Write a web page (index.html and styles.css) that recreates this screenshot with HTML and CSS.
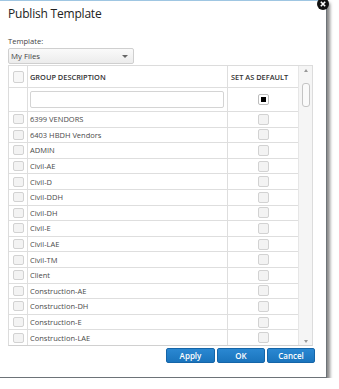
FILE: index.html
```html
<!DOCTYPE html>
<html>
<head>
<meta charset="utf-8">
<link rel="stylesheet" href="styles.css">
</head>
<body>
<div class="dialog">
  <div class="close"><svg width="12" height="12" viewBox="0 0 12 12"><circle cx="6" cy="6" r="6" fill="#111"/><path d="M3.8 3.8 L8.2 8.2 M8.2 3.8 L3.8 8.2" stroke="#fff" stroke-width="1.6"/></svg></div>
  <div class="title">Publish Template</div>
  <div class="label">Template:</div>
  <div class="select"><span>My Files</span><span class="caret"></span></div>
  <div class="grid">
    <div class="grid-body">
      <div class="row head">
        <div class="c-check"><span class="cb"></span></div>
        <div class="c-desc">GROUP DESCRIPTION</div>
        <div class="c-def">SET AS DEFAULT</div>
      </div>
      <div class="row filter">
        <div class="c-check"></div>
        <div class="c-desc"><div class="input"></div></div>
        <div class="c-def"><span class="cb checked"></span></div>
      </div>
      <div class="row"><div class="c-check"><span class="cb"></span></div><div class="c-desc">6399 VENDORS</div><div class="c-def"><span class="cb"></span></div></div>
      <div class="row"><div class="c-check"><span class="cb"></span></div><div class="c-desc">6403 HBDH Vendors</div><div class="c-def"><span class="cb"></span></div></div>
      <div class="row"><div class="c-check"><span class="cb"></span></div><div class="c-desc">ADMIN</div><div class="c-def"><span class="cb"></span></div></div>
      <div class="row"><div class="c-check"><span class="cb"></span></div><div class="c-desc">Civil-AE</div><div class="c-def"><span class="cb"></span></div></div>
      <div class="row"><div class="c-check"><span class="cb"></span></div><div class="c-desc">Civil-D</div><div class="c-def"><span class="cb"></span></div></div>
      <div class="row"><div class="c-check"><span class="cb"></span></div><div class="c-desc">Civil-DDH</div><div class="c-def"><span class="cb"></span></div></div>
      <div class="row"><div class="c-check"><span class="cb"></span></div><div class="c-desc">Civil-DH</div><div class="c-def"><span class="cb"></span></div></div>
      <div class="row"><div class="c-check"><span class="cb"></span></div><div class="c-desc">Civil-E</div><div class="c-def"><span class="cb"></span></div></div>
      <div class="row"><div class="c-check"><span class="cb"></span></div><div class="c-desc">Civil-LAE</div><div class="c-def"><span class="cb"></span></div></div>
      <div class="row"><div class="c-check"><span class="cb"></span></div><div class="c-desc">Civil-TM</div><div class="c-def"><span class="cb"></span></div></div>
      <div class="row"><div class="c-check"><span class="cb"></span></div><div class="c-desc">Client</div><div class="c-def"><span class="cb"></span></div></div>
      <div class="row"><div class="c-check"><span class="cb"></span></div><div class="c-desc">Construction-AE</div><div class="c-def"><span class="cb"></span></div></div>
      <div class="row"><div class="c-check"><span class="cb"></span></div><div class="c-desc">Construction-DH</div><div class="c-def"><span class="cb"></span></div></div>
      <div class="row"><div class="c-check"><span class="cb"></span></div><div class="c-desc">Construction-E</div><div class="c-def"><span class="cb"></span></div></div>
      <div class="row last"><div class="c-check"><span class="cb"></span></div><div class="c-desc">Construction-LAE</div><div class="c-def"><span class="cb"></span></div></div>
    </div>
    <div class="scrollbar">
      <span class="arrow up"></span>
      <div class="track"><div class="thumb"></div></div>
      <span class="arrow down"></span>
    </div>
  </div>
  <div class="buttons">
    <button class="btn">Apply</button>
    <button class="btn">OK</button>
    <button class="btn">Cancel</button>
  </div>
</div>
</body>
</html>
```
FILE: styles.css
```css
html, body { margin: 0; padding: 0; background: #fff; }
body { font-family: "Open Sans", "DejaVu Sans", sans-serif; color: #333; }

.dialog {
  position: relative;
  width: 327px;
  height: 378px;
  box-sizing: border-box;
  border-top: 1px solid #9fc6e2;
  border-right: 1px solid #6d7378;
  border-bottom: 1px solid #6d7378;
  padding: 0 0 0 8px;
  background: #fff;
  box-shadow: 3px 3px 3px rgba(40, 40, 40, 0.55);
}

.close {
  position: absolute;
  right: -3px;
  top: -3px;
  width: 12px;
  height: 12px;
  line-height: 0;
}

.title {
  font-size: 12px;
  font-weight: 500;
  line-height: 16px;
  padding-top: 5px;
  height: 28px;
  box-sizing: border-box;
  color: #222;
  letter-spacing: -0.2px;
}

.label {
  margin-top: 7px;
  font-size: 7.6px;
  line-height: 11px;
  color: #444;
}

.select {
  margin-top: 1px;
  width: 126px;
  height: 16px;
  box-sizing: border-box;
  border: 1px solid #cfcfcf;
  border-radius: 2px;
  background: linear-gradient(#fafafa, #ececec);
  font-size: 7.8px;
  line-height: 14px;
  padding: 0 5px 0 2px;
  display: flex;
  justify-content: space-between;
  align-items: center;
  color: #444;
}
.caret {
  width: 0; height: 0;
  border-left: 3px solid transparent;
  border-right: 3px solid transparent;
  border-top: 3px solid #666;
}

.grid {
  margin-top: 1px;
  width: 305px;
  box-sizing: border-box;
  border: 1px solid #dcdcdc;
  border-bottom: 1px solid #d0d0d0;
  display: flex;
}
.grid-body { flex: 1; }

.row {
  display: flex;
  height: 15.6px;
  box-sizing: border-box;
  border-bottom: 1px solid #dedede;
  font-size: 7.5px;
  color: #4a4a4a;
}
.row.last { border-bottom: 0; height: 14.8px; }
.row.head { height: 22px; font-weight: 600; font-size: 7.4px; color: #333; }
.row.filter { height: 24px; }

.c-check {
  width: 18px;
  flex: none;
  border-right: 1px solid #dedede;
  display: flex;
  align-items: center;
  justify-content: center;
}
.c-desc {
  width: 200px;
  flex: none;
  box-sizing: border-box;
  border-right: 1px solid #dedede;
  padding-left: 2px;
  display: flex;
  align-items: center;
}
.c-def {
  flex: 1;
  display: flex;
  align-items: center;
  justify-content: center;
}
.head .c-def { justify-content: flex-start; padding-left: 3px; }

.cb {
  width: 11px;
  height: 10px;
  box-sizing: border-box;
  border: 1px solid #d2d2d2;
  border-radius: 2px;
  background: #f3f3f3;
  display: block;
}
.c-def .cb { width: 11px; height: 11px; }
.head .c-check .cb { width: 11px; height: 12px; background: #f7f7f7; }
.cb.checked {
  background: #fff;
  border-color: #bdbdbd;
  position: relative;
}
.cb.checked::after {
  content: "";
  position: absolute;
  left: 2px; top: 2px;
  width: 5px; height: 5px;
  background: #000;
}

.input {
  width: 194px;
  height: 17px;
  box-sizing: border-box;
  border: 1px solid #d4d4d4;
  border-radius: 2px;
  background: #fff;
}

.scrollbar {
  width: 14px;
  flex: none;
  background: #f5f5f5;
  border-left: 1px solid #e6e6e6;
  display: flex;
  flex-direction: column;
  align-items: center;
  padding: 3px 0 2px;
  box-sizing: border-box;
}
.arrow {
  width: 0; height: 0;
  border-left: 2.5px solid transparent;
  border-right: 2.5px solid transparent;
  display: block;
}
.arrow.up { border-bottom: 3px solid #999; }
.arrow.down { border-top: 3px solid #999; }
.track { flex: 1; width: 100%; display: flex; justify-content: center; padding-top: 11px; }
.thumb {
  width: 8px;
  height: 24px;
  box-sizing: border-box;
  border: 1px solid #c4c4c4;
  border-radius: 3px;
  background: #fafafa;
}

.buttons {
  width: 307px;
  display: flex;
  justify-content: flex-end;
  gap: 2px;
  margin-top: 2px;
}
.btn {
  width: 48px;
  height: 15px;
  padding: 0;
  border: 1px solid #1565a8;
  border-radius: 2px;
  background: linear-gradient(#2a88d2, #1a74bd);
  color: #fff;
  font-family: "Open Sans", "DejaVu Sans", sans-serif;
  font-size: 8px;
  font-weight: 600;
  line-height: 13px;
}
.btn:first-child { width: 49px; }
```
